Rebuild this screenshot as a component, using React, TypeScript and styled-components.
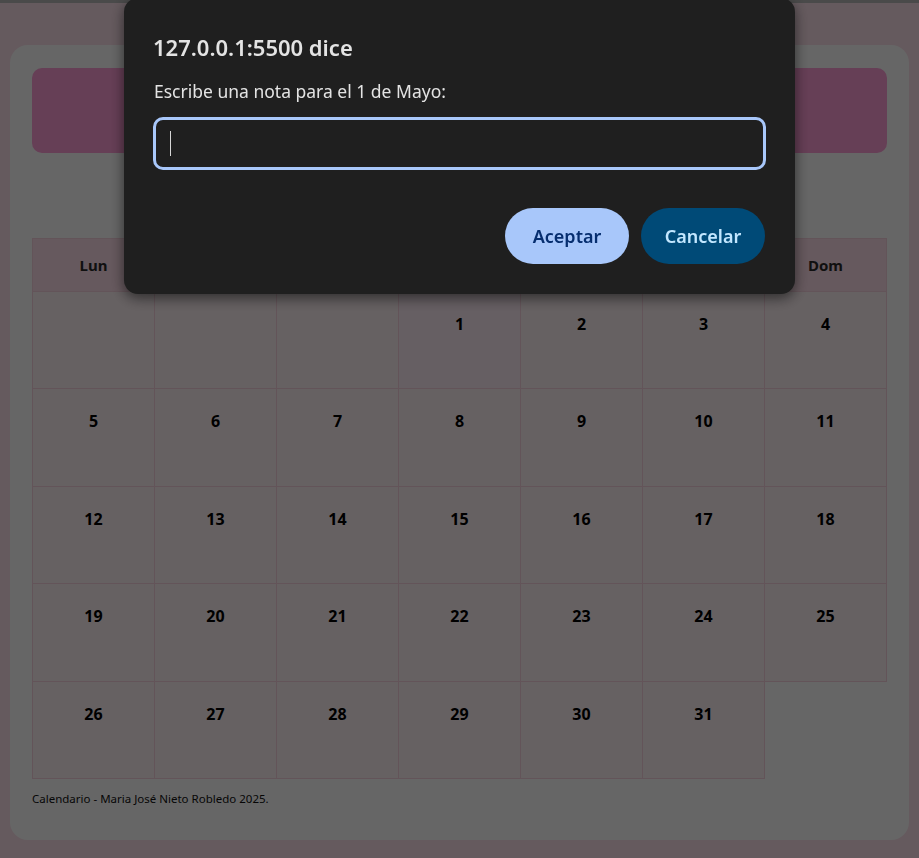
import React from "react";
import styled, { createGlobalStyle } from "styled-components";

const GlobalStyle = createGlobalStyle`
  html, body {
    margin: 0;
    padding: 0;
  }
  body {
    background: #fce1eb;
    font-family: "Noto Sans", "Open Sans", sans-serif;
  }
`;

const Page = styled.div`
  min-height: 858px;
  box-sizing: border-box;
  border-top: 3px solid #b8b8b8;
  padding: 42px 10px 17px;
`;

const Card = styled.main`
  background: #ffffff;
  border-radius: 18px;
  padding: 23px 22px 34px;
`;

// banda rosa de cabecera (el título queda tapado por el prompt)
const Header = styled.header`
  height: 85px;
  background: #ff9dd7;
  border-radius: 10px;
`;

// hueco de la navegación de meses, oculto tras el diálogo
const NavSpace = styled.nav`
  height: 85px;
`;

const Table = styled.table`
  width: 855px;
  border-collapse: collapse;
  table-layout: fixed;
`;

const HeadCell = styled.th`
  height: 52px;
  padding: 0;
  background: #ffdeea;
  color: #2a2a2a;
  font-size: 15px;
  font-weight: 700;
  border: 1px solid #f8d2df;
`;

const DayCell = styled.td<{ $today?: boolean }>`
  height: 97.4px;
  padding: 21px 0 0;
  vertical-align: top;
  text-align: center;
  font-size: 16px;
  font-weight: 700;
  color: #000;
  background: ${(p) => (p.$today ? "#ffedf7" : "#fff2f5")};
  border: 1px solid #f8d2df;
  box-sizing: border-box;
`;

const Footer = styled.footer`
  margin-top: 12px;
  font-size: 11.5px;
  color: #111;
`;

const Overlay = styled.div`
  position: fixed;
  inset: 0;
  background: rgba(0, 0, 0, 0.6);
`;

const Dialog = styled.div`
  position: fixed;
  top: -2px;
  left: 124px;
  width: 671px;
  height: 296px;
  box-sizing: border-box;
  background: #1f1f1f;
  border-radius: 14px;
  box-shadow: 0 4px 14px rgba(0, 0, 0, 0.55);
  padding: 35px 29px 30px;
  display: flex;
  flex-direction: column;
  color: #e3e3e3;
`;

const DialogTitle = styled.div`
  font-size: 22px;
  line-height: 28px;
  font-weight: 600;
`;

const DialogText = styled.div`
  margin-top: 18px;
  font-size: 17.5px;
  line-height: 24px;
  padding-left: 1px;
`;

const Field = styled.div`
  margin-top: 14px;
  height: 53px;
  box-sizing: border-box;
  border: 3px solid #a8c7fa;
  border-radius: 10px;
  display: flex;
  align-items: center;
  padding-left: 14px;
`;

const Caret = styled.span`
  width: 1px;
  height: 25px;
  background: #d6d6d6;
`;

const Actions = styled.div`
  margin-top: auto;
  display: flex;
  justify-content: flex-end;
  gap: 12px;
  padding-right: 1px;
`;

const DialogButton = styled.button<{ $primary?: boolean }>`
  width: 124px;
  height: 56px;
  border: none;
  border-radius: 28px;
  font-family: inherit;
  font-size: 18px;
  font-weight: 600;
  background: ${(p) => (p.$primary ? "#a8c7fa" : "#004a77")};
  color: ${(p) => (p.$primary ? "#062e6f" : "#c2e7ff")};
`;

const weekDays = ["Lun", "Mar", "Mié", "Jue", "Vie", "Sáb", "Dom"];

// mayo 2025 empieza en jueves
const buildWeeks = () => {
  const cells: (number | null)[] = [null, null, null];
  for (let d = 1; d <= 31; d++) cells.push(d);
  const weeks: (number | null)[][] = [];
  for (let i = 0; i < cells.length; i += 7) weeks.push(cells.slice(i, i + 7));
  return weeks;
};

const App = () => {
  const weeks = buildWeeks();

  return (
    <>
      <GlobalStyle />
      <Page>
        <Card>
          <Header />
          <NavSpace />
          <Table>
            <thead>
              <tr>
                {weekDays.map((d) => (
                  <HeadCell key={d}>{d}</HeadCell>
                ))}
              </tr>
            </thead>
            <tbody>
              {weeks.map((week, wi) => (
                <tr key={wi}>
                  {week.map((day, di) => (
                    <DayCell key={di} $today={day === 1}>
                      {day ?? ""}
                    </DayCell>
                  ))}
                </tr>
              ))}
            </tbody>
          </Table>
          <Footer>Calendario - Maria José Nieto Robledo 2025.</Footer>
        </Card>
      </Page>
      <Overlay />
      <Dialog role="dialog">
        <DialogTitle>127.0.0.1:5500 dice</DialogTitle>
        <DialogText>Escribe una nota para el 1 de Mayo:</DialogText>
        <Field>
          <Caret />
        </Field>
        <Actions>
          <DialogButton $primary>Aceptar</DialogButton>
          <DialogButton>Cancelar</DialogButton>
        </Actions>
      </Dialog>
    </>
  );
};

export default App;
